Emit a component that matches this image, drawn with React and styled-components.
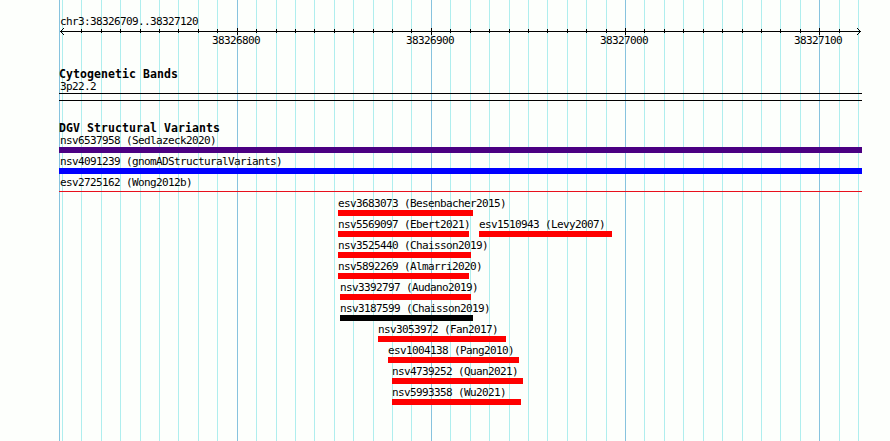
import styled, { createGlobalStyle } from 'styled-components'

const GlobalStyle = createGlobalStyle`
  body {
    margin: 0;
    background: #fdfffc;
  }
`

const LEFT = 59
const GRID = [
  62, 81, 101, 120, 140, 159, 178, 198, 217, 237, 256, 276, 295, 314, 334, 353, 373, 392,
  411, 431, 450, 470, 489, 509, 528, 547, 567, 586, 606, 625, 644, 664, 683, 703, 722, 742,
  761, 780, 800, 819, 839, 858,
]
const MAJOR = { 237: '38326800', 431: '38326900', 625: '38327000', 819: '38327100' }

const Browser = styled.main`
  position: relative;
  width: 890px;
  height: 441px;
  overflow: hidden;
  background: #fdfffc;
  color: #000;
  font-family: 'DejaVu Sans Mono', monospace;
`

const Backdrop = styled.svg`
  position: absolute;
  inset: 0;
  display: block;
`

const Content = styled.div`
  position: relative;
  box-sizing: border-box;
  width: 862px;
  padding: 16px 0 0 59px;
`

const Label = styled.div`
  height: 12px;
  line-height: 12px;
  font-size: 11px;
  letter-spacing: -0.622px;
  white-space: pre;
  padding-left: ${p => p.$indent ?? 1}px;
`

const Heading = styled.h2`
  margin: 0;
  height: 13px;
  line-height: 13px;
  font-size: 11.5px;
  font-weight: 700;
  letter-spacing: 0.077px;
  white-space: pre;
`

const Ruler = styled.svg`
  display: block;
  width: 803px;
  height: 7px;
`

const Scale = styled.div`
  display: flex;
  gap: 146px;
  padding-left: 153px;
  height: 33px;
`

const Cytoband = styled.div`
  box-sizing: border-box;
  height: 8px;
  margin-bottom: 21px;
  border: solid #000;
  border-width: 1px 0;
`

const Track = styled.div`
  display: flex;
  height: 21px;
`

const Feature = styled.div`
  flex: none;
  width: ${p => p.$width}px;
  margin-left: ${p => p.$gap}px;
`

const Bar = styled.div`
  height: ${p => p.$thin ? 1 : 6}px;
  margin-top: ${p => p.$thin ? 2 : 0}px;
  background: ${p => p.$color};
`

const RED = '#ff0000'

const TRACKS = [
  [{ name: 'nsv6537958 (Sedlazeck2020)', gap: 0, width: 803, color: '#4b0082', indent: 1 }],
  [{ name: 'nsv4091239 (gnomADStructuralVariants)', gap: 0, width: 803, color: '#0000ff', indent: 1 }],
  [{ name: 'esv2725162 (Wong2012b)', gap: 0, width: 803, color: '#e8101c', indent: 1, thin: true }],
  [{ name: 'esv3683073 (Besenbacher2015)', gap: 279, width: 135 }],
  [
    { name: 'nsv5569097 (Ebert2021)', gap: 279, width: 131 },
    { name: 'esv1510943 (Levy2007)', gap: 10, width: 133 },
  ],
  [{ name: 'nsv3525440 (Chaisson2019)', gap: 279, width: 133 }],
  [{ name: 'nsv5892269 (Almarri2020)', gap: 279, width: 131 }],
  [{ name: 'nsv3392797 (Audano2019)', gap: 281, width: 131 }],
  [{ name: 'nsv3187599 (Chaisson2019)', gap: 281, width: 133, color: '#000' }],
  [{ name: 'nsv3053972 (Fan2017)', gap: 319, width: 128 }],
  [{ name: 'esv1004138 (Pang2010)', gap: 329, width: 131 }],
  [{ name: 'nsv4739252 (Quan2021)', gap: 333, width: 131 }],
  [{ name: 'nsv5993358 (Wu2021)', gap: 333, width: 129 }],
]

function GridLines() {
  return (
    <Backdrop width="890" height="441" shapeRendering="crispEdges">
      <rect x={LEFT} width="1" height="441" fill="#87c3de" />
      {GRID.map(x => (
        <rect key={x} x={x} width="1" height="441" fill={MAJOR[x] ? '#87c3de' : '#afeeee'} />
      ))}
    </Backdrop>
  )
}

function RulerAxis() {
  return (
    <Ruler viewBox="59 28 803 7" shapeRendering="crispEdges">
      <rect x="60" y="31" width="801" height="1" />
      {GRID.slice(1, -1).map(x => (
        <rect key={x} x={x} y={MAJOR[x] ? 28 : 29} width="1" height={MAJOR[x] ? 7 : 4} />
      ))}
      <path d="M61 30h1v1h-1zM62 29h1v1h-1zM63 28h1v1h-1zM61 32h1v1h-1zM62 33h1v1h-1zM63 34h1v1h-1z" />
      <path d="M859 30h1v1h-1zM858 29h1v1h-1zM857 28h1v1h-1zM859 32h1v1h-1zM858 33h1v1h-1zM857 34h1v1h-1z" />
    </Ruler>
  )
}

export default function App() {
  return (
    <Browser>
      <GlobalStyle />
      <GridLines />
      <Content>
        <Label>chr3:38326709..38327120</Label>
        <RulerAxis />
        <Scale>
          {Object.values(MAJOR).map(value => (
            <Label key={value} $indent={0}>{value}</Label>
          ))}
        </Scale>
        <Heading>Cytogenetic Bands</Heading>
        <Label>3p22.2</Label>
        <Cytoband />
        <Heading>DGV Structural Variants</Heading>
        {TRACKS.map((features, i) => (
          <Track key={i}>
            {features.map(f => (
              <Feature key={f.name} $gap={f.gap} $width={f.width}>
                <Label $indent={f.indent ?? 0}>{f.name}</Label>
                <Bar $color={f.color ?? RED} $thin={f.thin} />
              </Feature>
            ))}
          </Track>
        ))}
      </Content>
    </Browser>
  )
}
